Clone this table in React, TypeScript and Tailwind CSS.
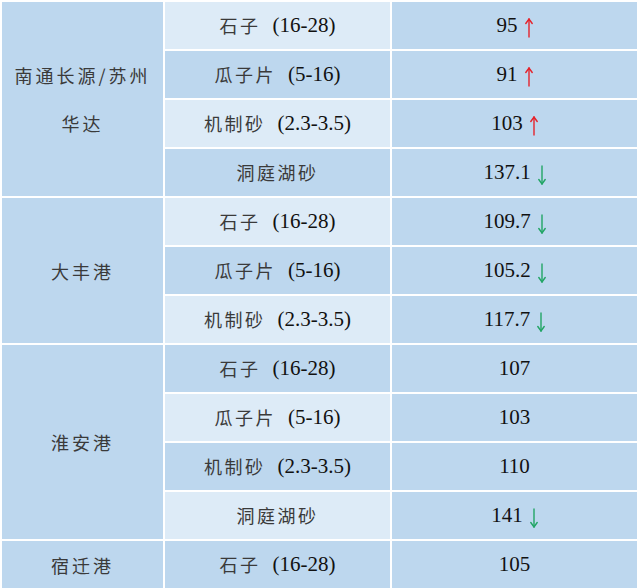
const DARK = "bg-[#bdd7ee]";
const LIGHT = "bg-[#ddebf7]";
const CJK = "font-['Noto_Sans_CJK_SC',sans-serif]";
const NUM = "font-['Liberation_Serif','Times_New_Roman',serif]";

type Trend = "up" | "down" | null;

interface Row {
  name: string;
  spec?: string;
  price: string;
  trend: Trend;
}

interface Group {
  port: string[];
  rows: Row[];
}

const GROUPS: Group[] = [
  {
    port: ["南通长源/苏州", "华达"],
    rows: [
      { name: "石子", spec: "(16-28)", price: "95", trend: "up" },
      { name: "瓜子片", spec: "(5-16)", price: "91", trend: "up" },
      { name: "机制砂", spec: "(2.3-3.5)", price: "103", trend: "up" },
      { name: "洞庭湖砂", price: "137.1", trend: "down" },
    ],
  },
  {
    port: ["大丰港"],
    rows: [
      { name: "石子", spec: "(16-28)", price: "109.7", trend: "down" },
      { name: "瓜子片", spec: "(5-16)", price: "105.2", trend: "down" },
      { name: "机制砂", spec: "(2.3-3.5)", price: "117.7", trend: "down" },
    ],
  },
  {
    port: ["淮安港"],
    rows: [
      { name: "石子", spec: "(16-28)", price: "107", trend: null },
      { name: "瓜子片", spec: "(5-16)", price: "103", trend: null },
      { name: "机制砂", spec: "(2.3-3.5)", price: "110", trend: null },
      { name: "洞庭湖砂", price: "141", trend: "down" },
    ],
  },
  {
    port: ["宿迁港"],
    rows: [{ name: "石子", spec: "(16-28)", price: "105", trend: null }],
  },
];

function Arrow({ trend }: { trend: Trend }) {
  if (!trend) return null;
  const up = trend === "up";
  return (
    <svg
      width="8"
      height="20"
      viewBox="0 0 8 20"
      className="ml-[7px] translate-y-[2px]"
      fill="none"
      stroke={up ? "#e5232b" : "#22a565"}
      strokeWidth="1.4"
      strokeLinecap="round"
    >
      <line x1="4" y1="1" x2="4" y2="19" />
      {up ? <polyline points="0.8,5.5 4,1 7.2,5.5" /> : <polyline points="0.8,14.5 4,19 7.2,14.5" />}
    </svg>
  );
}

export default function App() {
  let rowIndex = 0;
  return (
    <div className="w-[640px] h-[588px] bg-white pt-[2px] pl-[2px] overflow-hidden">
      <div className="grid grid-cols-[161px_225px_245px] auto-rows-[47px] gap-[2px]">
        {GROUPS.map((g, gi) => {
          const start = rowIndex;
          rowIndex += g.rows.length;
          return [
            <div
              key={`port-${gi}`}
              className={`${DARK} ${CJK} col-start-1 flex flex-col items-center justify-center text-[18px] leading-[48px] tracking-[3px] text-[#3a3a3a]`}
              style={{ gridRow: `${start + 1} / span ${g.rows.length}` }}
            >
              {g.port.map((line) => (
                <span key={line}>{line}</span>
              ))}
            </div>,
            ...g.rows.map((r, ri) => {
              const idx = start + ri;
              const bg = idx % 2 === 0 ? LIGHT : DARK;
              return [
                <div
                  key={`name-${idx}`}
                  className={`${bg} col-start-2 flex items-center justify-center`}
                  style={{ gridRow: `${idx + 1}` }}
                >
                  <span className={`${CJK} text-[18px] tracking-[2.5px] text-[#3a3a3a]`}>{r.name}</span>
                  {r.spec && <span className={`${NUM} ml-[12px] text-[21px] text-[#111]`}>{r.spec}</span>}
                </div>,
                <div
                  key={`price-${idx}`}
                  className={`${DARK} ${NUM} col-start-3 flex items-center justify-center text-[21px] text-[#111]`}
                  style={{ gridRow: `${idx + 1}` }}
                >
                  <span>{r.price}</span>
                  <Arrow trend={r.trend} />
                </div>,
              ];
            }),
          ];
        })}
      </div>
    </div>
  );
}
